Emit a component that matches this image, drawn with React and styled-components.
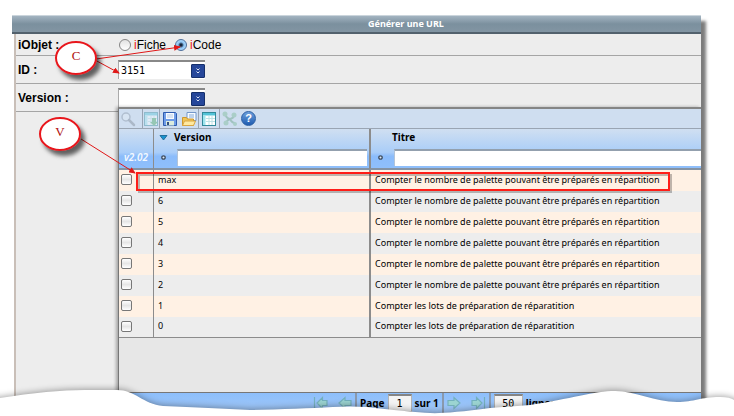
import React from "react";
import styled, { createGlobalStyle } from "styled-components";

const line = "#8c8c8c";
const sans = '"Noto Sans", sans-serif';

const GlobalStyle = createGlobalStyle`
  * { box-sizing: border-box; }
  body { margin: 0; background: #fff; font-family: "Liberation Sans", sans-serif; color: #000; }
  input, button { font: inherit; color: inherit; margin: 0; padding: 0; }
`;

const Page = styled.main`
  position: relative;
  display: flex;
  min-height: 100vh;
  padding: 15px 33px 0 12px;
  overflow: hidden;
`;

const Window = styled.section`
  flex: 1;
  min-width: 0;
  display: flex;
  flex-direction: column;
  background: #fff;
  box-shadow: 5px 6px 3px #7c7c7c;
`;

const TitleBar = styled.h1`
  margin: 0;
  height: 19px;
  padding-left: 356px;
  border-top: 1px solid #cbd5dc;
  border-bottom: 2px solid #52616d;
  background: linear-gradient(#a3b4c1, #7b909e 50%, #8295a3);
  color: #fff;
  font: bold 9px/15px ${sans};
`;

const Form = styled.form`
  flex: 1;
  display: flex;
  flex-direction: column;
  margin-left: 2px;
  border-left: 2px solid #c9bfb8;
  background: #ededed;
`;

const FormRow = styled.div`
  display: flex;
  align-items: center;
  height: ${(p) => p.$height}px;
  border-bottom: 1px solid #a5a5a5;
`;

const FieldLabel = styled.label`
  flex: none;
  width: 102px;
  padding-left: 2px;
  font-size: 12px;
  font-weight: bold;
`;

const VersionRow = styled.div`
  flex: 1;
  display: flex;
  align-items: flex-start;

  > ${FieldLabel} {
    height: 28px;
    line-height: 28px;
    border-bottom: 1px solid #a5a5a5;
  }
`;

const VersionContent = styled.div`
  flex: 1;
  min-width: 0;
  align-self: stretch;
  display: flex;
  flex-direction: column;
`;

const ComboSlot = styled.div`
  display: flex;
  align-items: center;
  height: 23px;
  padding-top: 4px;
`;

const Radio = styled.label`
  display: flex;
  align-items: center;
  gap: 3px;
  margin-right: 9px;
  font-size: 12px;

  input {
    appearance: none;
    width: 12px;
    height: 12px;
    border: 1px solid #858585;
    border-radius: 50%;
    background: linear-gradient(#e2e2e2, #fff);
  }
  input:checked {
    border-color: #4c6f9c;
    background: radial-gradient(circle, #14263c 1px, #8fc6f4 3px, #b8e0fb 6px);
  }
`;

const RadioGroup = styled.div`
  display: flex;
  padding-left: 1px;
`;

const RadioText = styled.span`
  &::first-letter { color: #f01818; }
  display: inline-block;
`;

const ComboBox = styled.div`
  display: flex;
  align-items: center;
  width: 87px;
  height: 19px;
  border-top: 2px solid #888;
  border-left: 1px solid #aaa;
  background: #fff;

  input {
    flex: 1;
    min-width: 0;
    border: 0;
    outline: 0;
    padding-left: 2px;
    background: none;
    font: 10px/14px "DejaVu Sans Mono", monospace;
  }
  button {
    display: flex;
    align-items: center;
    justify-content: center;
    width: 14px;
    height: 14px;
    border: 1px solid #16306c;
    border-radius: 1px;
    background: #26479a;
  }
`;

const Panel = styled.div`
  flex: 1;
  display: flex;
  flex-direction: column;
  border-top: 2px solid #858585;
  border-left: 1px solid #777;
  background: #e7e7e7;
  box-shadow: -2px 0 3px rgba(0, 0, 0, 0.3);
`;

const Toolbar = styled.div`
  display: flex;
  height: 20px;
  border-bottom: 1px solid #9aa5b3;
  background: #cfdef0;
`;

const ToolGroup = styled.div`
  display: flex;
  align-items: center;
  justify-content: center;
  gap: 3px;
  width: ${(p) => p.$width}px;
  padding-right: ${(p) => p.$inset || 0}px;
  border-right: ${(p) => (p.$last ? "0" : "1px solid #98a4b4")};
`;

const IconButton = styled.button`
  display: flex;
  flex: none;
  align-items: center;
  justify-content: center;
  width: 16px;
  height: 16px;
  border: 0;
  background: none;
  opacity: ${(p) => (p.disabled ? 0.4 : 1)};
`;

const Grid = styled.table`
  width: 100%;
  table-layout: fixed;
  border-collapse: separate;
  border-spacing: 0;
  font: 9px/18px ${sans};
`;

const HeadCell = styled.th`
  width: ${(p) => (p.$width ? `${p.$width}px` : "auto")};
  height: 41px;
  padding: 0;
  vertical-align: top;
  text-align: left;
  border-left: ${(p) => p.$edge || 0}px solid ${line};
  border-bottom: 2px solid #8593a3;
  background: linear-gradient(#d0dff1, #a9cdf8 60%, #8bbcfb 70%, #8fbffb);
  font: bold 10px/17px ${sans};
`;

const HeadTitle = styled.div`
  display: flex;
  align-items: center;
  gap: 6px;
  height: 20px;
  padding-left: ${(p) => p.$indent}px;
  padding-bottom: 3px;
`;

const VersionTag = styled.div`
  padding-top: 20px;
  text-align: center;
  color: #f4f9ff;
  font: italic 600 10px/17px ${sans};
`;

const Filter = styled.label`
  display: flex;
  align-items: center;
  height: 17px;
  padding-left: 7px;

  svg { flex: none; margin-right: 11px; }
  input {
    flex: 1;
    min-width: 0;
    height: 17px;
    margin-right: ${(p) => p.$gap}px;
    border: 0;
    border-top: 2px solid #93a0ae;
    border-left: 1px solid #b3c4d8;
    background: #fff;
    padding: 0 3px;
  }
`;

const Row = styled.tr`
  background: ${(p) => (p.$tinted ? "#fff1e4" : "#ededed")};
  &:last-child td { border-bottom: 1px solid ${line}; }
`;

const Cell = styled.td`
  height: 21px;
  padding: 0 0 2px ${(p) => p.$indent}px;
  border-left: ${(p) => p.$edge || 0}px solid ${line};
  white-space: nowrap;
  overflow: hidden;
`;

const CheckBox = styled.input`
  appearance: none;
  display: block;
  width: 11px;
  height: 11px;
  border: 1px solid #777;
  border-radius: 2px;
  background: linear-gradient(#fff, #e6e6e6 50%, #fff);
`;

const Pager = styled.div`
  display: flex;
  height: 24px;
  margin-top: auto;
  padding: 0 0 3px 191px;
  border-top: 1px solid #777;
  background: linear-gradient(#8dbffc, #a5c8f4);
  font: bold 10px/18px ${sans};
`;

const PagerGroup = styled.div`
  display: flex;
  align-items: center;
  gap: ${(p) => p.$gap}px;
  padding: 0 3px;
  border-right: ${(p) => (p.$last ? "0" : "2px solid #8a99ad")};
`;

const PagerLabel = styled.label`
  display: flex;
  align-items: center;
  gap: 3px;
  white-space: nowrap;
`;

const PagerInput = styled.input`
  width: ${(p) => p.$width}px;
  height: 18px;
  border: 1px solid #b4b4b4;
  border-top: 2px solid #858585;
  background: #f3f3f3;
  text-align: center;
  font: 10px/14px "DejaVu Sans Mono", monospace;
`;

const Annotations = styled.svg`
  position: absolute;
  top: 0;
  left: 0;
  pointer-events: none;
`;

const TornEdge = styled.svg`
  position: absolute;
  left: 0;
  bottom: 0;
  width: 100%;
  height: 30px;
  overflow: visible;
  pointer-events: none;
  filter: drop-shadow(0 -1px 3px rgba(0, 0, 0, 0.35));
`;

const CalloutText = styled.text`
  font: 13px "Liberation Serif", serif;
  fill: #b01010;
  text-anchor: middle;
`;

const Chevrons = () => (
  <svg width="6" height="8" viewBox="0 0 6 8" fill="none" stroke="#dfe6f6" strokeWidth="1">
    <path d="M1.500 1.500l1.500 1.500 1.500-1.500M1.500 4.500l1.500 1.500 1.500-1.500" />
  </svg>
);

const Search = () => (
  <svg width="16" height="16" viewBox="0 0 16 16" fill="none">
    <circle cx="6" cy="6" r="4" fill="#e4edf6" stroke="#8592a2" strokeWidth="1.5" />
    <path d="M9 9l5 5" stroke="#77818d" strokeWidth="2.5" strokeLinecap="round" />
  </svg>
);

const TableIcon = ({ arrow }) => (
  <svg width="16" height="16" viewBox="0 0 16 16">
    <rect x="1.5" y="1.5" width="13" height="13" fill="#fff" stroke="#32899a" />
    <path d="M2 2h12v2.5H2z" fill="#52c3d8" />
    <path d="M2 4.5h2.5V14H2z" fill="#9ee4ed" />
    <path d="M5 7.5h9M5 10.5h9M8 5v9M11 5v9" stroke="#bde2e5" />
    {arrow && <path d="M9 7h4v4h2l-4 4-4-4h2z" fill="#43a55c" />}
  </svg>
);

const Save = () => (
  <svg width="16" height="16" viewBox="0 0 16 16">
    <path d="M1.5 1.5h12l1 1v12h-13z" fill="#6f9de8" stroke="#2f5cae" />
    <path d="M4 2h8v6H4z" fill="#f8fbff" />
    <path d="M5 4h6M5 6h6" stroke="#b5cbe6" />
    <path d="M4 10h8v4.5H4z" fill="#dcecdd" />
    <path d="M5 11h2v3H5z" fill="#344f7e" />
  </svg>
);

const Folder = () => (
  <svg width="16" height="16" viewBox="0 0 16 16">
    <path d="M6 1.5h9v8H6z" fill="#f7fbff" stroke="#7397c9" />
    <path d="M8 4h5M8 6h5" stroke="#82a9da" />
    <path d="M1.5 6.500h4l1 1.500h6v6.500h-11z" fill="#f0c658" stroke="#cf982f" />
    <path d="M1.500 14.500l2-4.500h11l-2 4.500z" fill="#ffe9a0" stroke="#d8a542" />
  </svg>
);

const Branch = () => (
  <svg width="16" height="16" viewBox="0 0 16 16" fill="none" stroke="#5f9b7a" strokeWidth="2">
    <path d="M3 3q1 4 5 5M12 4q0 3-4 4-3 1-4 4M8 8q2 4 5 4" />
    <g fill="#74b88e" stroke="none">
      <circle cx="3" cy="3" r="2.500" />
      <circle cx="12" cy="4" r="2.500" />
      <circle cx="4" cy="12" r="2.500" />
      <circle cx="13" cy="13" r="2" />
    </g>
  </svg>
);

const HelpMark = styled.span`
  display: flex;
  flex: none;
  align-items: center;
  justify-content: center;
  width: 15px;
  height: 15px;
  border: 1px solid #2a5ea3;
  border-radius: 50%;
  background: linear-gradient(#6da0dd, #1f5cb0);
  color: #fff;
  font: bold 11px/13px "Liberation Sans", sans-serif;
`;

const SortMark = () => (
  <svg width="9" height="6" viewBox="0 0 9 6">
    <path d="M1 0.5h7L4.500 5z" fill="#1994cf" stroke="#23709d" strokeLinejoin="round" />
  </svg>
);

const FilterMark = () => (
  <svg width="5" height="5" viewBox="0 0 5 5">
    <circle cx="2.5" cy="2.5" r="1.7" fill="#dbe9fa" stroke="#3e4b5b" strokeWidth="1.3" />
  </svg>
);

const arrowPaths = {
  first: "M14 5.500H9.500V2.500L4 8l5.500 5.500v-3H14zM1.500 2v12",
  previous: "M15 5.500H9V2.500L3 8l6 5.500v-3h6z",
  next: "M1 5.500h6v-3L13 8l-6 5.500v-3H1z",
  last: "M2 5.500h4.500v-3L12 8l-5.500 5.500v-3H2zM14.500 2v12",
};

const ArrowIcon = ({ kind }) => (
  <svg width="16" height="16" viewBox="0 0 16 16">
    <path d={arrowPaths[kind]} fill="#9fe0b8" stroke="#5ea596" strokeWidth="1.2" />
  </svg>
);

const PagerButton = styled(IconButton)`
  opacity: 0.6;
`;

const LONG = "Compter le nombre de palette pouvant être préparés en répartition";
const SHORT = "Compter les lots de préparation de réparatition";
const rows = [
  ["max", LONG],
  ["6", LONG],
  ["5", LONG],
  ["4", LONG],
  ["3", LONG],
  ["2", LONG],
  ["1", SHORT],
  ["0", SHORT],
];

function Combo({ id, value }) {
  return (
    <ComboBox>
      <input id={id} type="text" defaultValue={value} />
      <button type="button" aria-label="Ouvrir la liste">
        <Chevrons />
      </button>
    </ComboBox>
  );
}

function VersionTable() {
  return (
    <Grid>
      <thead>
        <tr>
          <HeadCell $width={34}>
            <VersionTag>v2.02</VersionTag>
          </HeadCell>
          <HeadCell $width={216} $edge={1}>
            <HeadTitle $indent={5}>
              <SortMark />
              Version
            </HeadTitle>
            <Filter $gap={2}>
              <FilterMark />
              <input type="text" aria-label="Filtrer par version" />
            </Filter>
          </HeadCell>
          <HeadCell $edge={2}>
            <HeadTitle $indent={21}>Titre</HeadTitle>
            <Filter $gap={0}>
              <FilterMark />
              <input type="text" aria-label="Filtrer par titre" />
            </Filter>
          </HeadCell>
        </tr>
      </thead>
      <tbody>
        {rows.map(([version, title], i) => (
          <Row key={version} $tinted={i % 2 === 0}>
            <Cell $indent={2}>
              <CheckBox type="checkbox" aria-label={`Version ${version}`} />
            </Cell>
            <Cell $indent={4} $edge={1}>{version}</Cell>
            <Cell $indent={4} $edge={2}>{title}</Cell>
          </Row>
        ))}
      </tbody>
    </Grid>
  );
}

export default function App() {
  return (
    <>
      <GlobalStyle />
      <Page>
        <Window>
          <TitleBar>Générer une URL</TitleBar>
          <Form onSubmit={(e) => e.preventDefault()}>
            <FormRow $height={22}>
              <FieldLabel as="span" id="object-label">iObjet :</FieldLabel>
              <RadioGroup role="radiogroup" aria-labelledby="object-label">
                <Radio>
                  <input type="radio" name="object" />
                  <RadioText>iFiche</RadioText>
                </Radio>
                <Radio>
                  <input type="radio" name="object" defaultChecked />
                  <RadioText>iCode</RadioText>
                </Radio>
              </RadioGroup>
            </FormRow>
            <FormRow $height={28}>
              <FieldLabel htmlFor="object-id">ID :</FieldLabel>
              <Combo id="object-id" value="3151" />
            </FormRow>
            <VersionRow>
              <FieldLabel htmlFor="version">Version :</FieldLabel>
              <VersionContent>
                <ComboSlot>
                  <Combo id="version" value="" />
                </ComboSlot>
                <Panel>
                  <Toolbar>
                    <ToolGroup $width={24} $inset={6}>
                      <IconButton type="button" aria-label="Rechercher" disabled><Search /></IconButton>
                    </ToolGroup>
                    <ToolGroup $width={17}>
                      <IconButton type="button" aria-label="Exporter" disabled><TableIcon arrow /></IconButton>
                    </ToolGroup>
                    <ToolGroup $width={39}>
                      <IconButton type="button" aria-label="Enregistrer"><Save /></IconButton>
                      <IconButton type="button" aria-label="Ouvrir"><Folder /></IconButton>
                    </ToolGroup>
                    <ToolGroup $width={21}>
                      <IconButton type="button" aria-label="Colonnes"><TableIcon /></IconButton>
                    </ToolGroup>
                    <ToolGroup $width={38} $last>
                      <IconButton type="button" aria-label="Arborescence" disabled><Branch /></IconButton>
                      <IconButton type="button" aria-label="Aide"><HelpMark>?</HelpMark></IconButton>
                    </ToolGroup>
                  </Toolbar>
                  <VersionTable />
                  <Pager>
                    <PagerGroup $gap={7}>
                      <PagerButton type="button" aria-label="Première page"><ArrowIcon kind="first" /></PagerButton>
                      <PagerButton type="button" aria-label="Page précédente"><ArrowIcon kind="previous" /></PagerButton>
                    </PagerGroup>
                    <PagerGroup $gap={3}>
                      <PagerLabel>
                        Page
                        <PagerInput $width={24} type="text" defaultValue="1" />
                      </PagerLabel>
                      sur 1
                    </PagerGroup>
                    <PagerGroup $gap={7}>
                      <PagerButton type="button" aria-label="Page suivante"><ArrowIcon kind="next" /></PagerButton>
                      <PagerButton type="button" aria-label="Dernière page"><ArrowIcon kind="last" /></PagerButton>
                    </PagerGroup>
                    <PagerGroup $gap={3} $last>
                      <PagerLabel>
                        <PagerInput $width={29} type="text" defaultValue="50" />
                        lignes
                      </PagerLabel>
                    </PagerGroup>
                  </Pager>
                </Panel>
              </VersionContent>
            </VersionRow>
          </Form>
        </Window>

        <Annotations width="734" height="416" viewBox="0 0 734 416">
          <defs>
            <marker id="tip" viewBox="0 0 7 6" refX="6" refY="3" markerWidth="7" markerHeight="6" orient="auto" markerUnits="userSpaceOnUse">
              <path d="M0 0l7 3-7 3z" fill="#e01818" />
            </marker>
            <filter id="shade" x="-20%" y="-20%" width="160%" height="170%">
              <feDropShadow dx="4" dy="5" stdDeviation="2" floodColor="#000" floodOpacity="0.6" />
            </filter>
          </defs>
          <rect x="139" y="175" width="532" height="17" fill="none" stroke="#000" strokeOpacity="0.25" strokeWidth="2" />
          <rect x="137" y="173" width="532" height="17" fill="none" stroke="#ff1d17" strokeWidth="2" />
          <g stroke="#e01818">
            <path d="M96 59L180 47" markerEnd="url(#tip)" />
            <path d="M95 60L119 73" markerEnd="url(#tip)" />
            <path d="M81 139L135 173" markerEnd="url(#tip)" />
          </g>
          <g fill="#fff" stroke="#e8191d" strokeWidth="2" filter="url(#shade)">
            <ellipse cx="76" cy="58" rx="20" ry="16" />
            <ellipse cx="60" cy="134" rx="20" ry="16" />
          </g>
          <CalloutText x="76" y="60">C</CalloutText>
          <CalloutText x="60" y="136">V</CalloutText>
        </Annotations>

        <TornEdge viewBox="0 0 734 30" preserveAspectRatio="none">
          <path
            fill="#fff"
            d="M-20 14L0 12Q50 4 85 4L117 4C135 4 143 18 163 20Q210 22 250 24Q300 23 333 21Q350 20 367 21Q410 26 430 27Q445 28 490 22L530 19C570 13 595 5 615 5C635 5 655 16 677 16C695 16 700 11 720 11Q730 11 734 14L754 18V50H-20Z"
          />
        </TornEdge>
      </Page>
    </>
  );
}
